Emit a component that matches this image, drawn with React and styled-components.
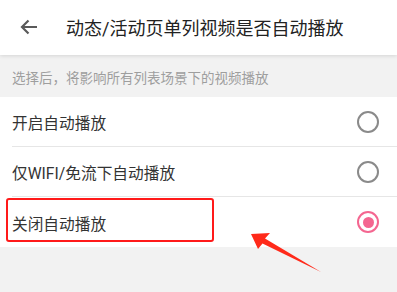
import styled, { createGlobalStyle } from 'styled-components';

const GlobalStyle = createGlobalStyle`
  html, body {
    margin: 0;
    padding: 0;
    background: #f2f2f2;
  }
  body {
    font-family: Roboto, "Noto Sans CJK SC", sans-serif;
  }
`;

const options = [
  { label: '开启自动播放', checked: false },
  { label: '仅WIFI/免流下自动播放', checked: false },
  { label: '关闭自动播放', checked: true, marked: true }
];

const App = () => {
  return (
    <Page>
      <GlobalStyle />
      <Header>
        <BackButton>
          <svg width="20" height="20" viewBox="0 0 20 20">
            <path d="M18 10H3M9.5 3.5L3 10l6.5 6.5" fill="none" stroke="#5a5a5a" strokeWidth="2.2" />
          </svg>
        </BackButton>
        <Title>动态/活动页单列视频是否自动播放</Title>
      </Header>
      <Hint>选择后，将影响所有列表场景下的视频播放</Hint>
      <List>
        { options.map((opt, index) =>
          <Row key={ index } last={ index === options.length - 1 }>
            <Label>{ opt.label }</Label>
            <Radio checked={ opt.checked } />
            { opt.marked && <MarkBox /> }
          </Row>
        ) }
      </List>
      <Arrow width="397" height="292" viewBox="0 0 397 292">
        <polygon
          points="251,234 270,233 265,238.5 321,272 262.5,243.5 258,249"
          fill="#ff2a1a"
        />
      </Arrow>
    </Page>
  );
};

const Page = styled.div`
  position: relative;
  width: 397px;
  height: 292px;
  background: #f2f2f2;
  overflow: hidden;
`;
const Header = styled.div`
  position: relative;
  z-index: 1;
  display: flex;
  align-items: center;
  height: 53px;
  padding-bottom: 2px;
  background: #fff;
  box-shadow: 0 1px 4px rgba(0, 0, 0, 0.12);
`;
const BackButton = styled.div`
  display: flex;
  align-items: center;
  justify-content: center;
  width: 20px;
  height: 20px;
  margin-left: 19px;
  margin-right: 27px;
`;
const Title = styled.div`
  font-size: 18px;
  color: #222;
`;
const Hint = styled.div`
  height: 42px;
  line-height: 47px;
  padding-left: 12px;
  font-size: 13.5px;
  color: #9e9e9e;
`;
const List = styled.div`
  background: #fff;
`;
const Row = styled.div`
  position: relative;
  display: flex;
  align-items: center;
  justify-content: space-between;
  height: 50px;
  margin-left: 12px;
  padding-right: 18px;
  border-bottom: ${ p => p.last ? 'none' : '1px solid #e6e6e6' };
  box-sizing: border-box;
`;
const Label = styled.div`
  font-size: 15.7px;
  color: #333;
  padding-top: 2px;
`;
const Radio = styled.div`
  position: relative;
  width: 22px;
  height: 22px;
  border-radius: 50%;
  box-sizing: border-box;
  border: 2px solid ${ p => p.checked ? '#f46690' : '#8a8a8a' };

  &::after {
    content: '';
    display: ${ p => p.checked ? 'block' : 'none' };
    position: absolute;
    left: 3.5px;
    top: 3.5px;
    width: 11px;
    height: 11px;
    border-radius: 50%;
    background: #f46690;
  }
`;
const MarkBox = styled.div`
  position: absolute;
  left: -6px;
  top: 1px;
  width: 208px;
  height: 44px;
  box-sizing: border-box;
  border: 2px solid #ff1a1a;
  border-radius: 3px;
`;
const Arrow = styled.svg`
  position: absolute;
  left: 0;
  top: 0;
  pointer-events: none;
`;

export default App;
